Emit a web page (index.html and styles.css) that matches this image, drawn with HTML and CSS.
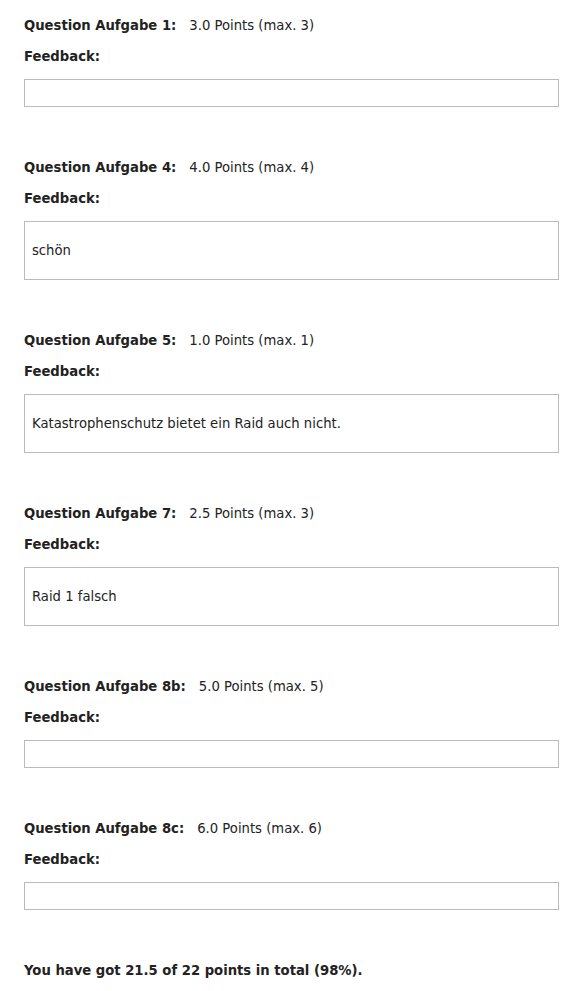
FILE: index.html
```html
<!DOCTYPE html>
<html>
<head>
<meta charset="utf-8">
<link rel="stylesheet" href="styles.css">
</head>
<body>
<div class="page">
  <div class="question">
    <div class="qline"><span class="label">Question Aufgabe 1:</span><span class="points">3.0 Points (max. 3)</span></div>
    <div class="fb">Feedback:</div>
    <div class="box"></div>
  </div>
  <div class="question">
    <div class="qline"><span class="label">Question Aufgabe 4:</span><span class="points">4.0 Points (max. 4)</span></div>
    <div class="fb">Feedback:</div>
    <div class="box text">schön</div>
  </div>
  <div class="question">
    <div class="qline"><span class="label">Question Aufgabe 5:</span><span class="points">1.0 Points (max. 1)</span></div>
    <div class="fb">Feedback:</div>
    <div class="box text">Katastrophenschutz bietet ein Raid auch nicht.</div>
  </div>
  <div class="question">
    <div class="qline"><span class="label">Question Aufgabe 7:</span><span class="points">2.5 Points (max. 3)</span></div>
    <div class="fb">Feedback:</div>
    <div class="box text">Raid 1 falsch</div>
  </div>
  <div class="question">
    <div class="qline"><span class="label">Question Aufgabe 8b:</span><span class="points">5.0 Points (max. 5)</span></div>
    <div class="fb">Feedback:</div>
    <div class="box"></div>
  </div>
  <div class="question">
    <div class="qline"><span class="label">Question Aufgabe 8c:</span><span class="points">6.0 Points (max. 6)</span></div>
    <div class="fb">Feedback:</div>
    <div class="box"></div>
  </div>
  <div class="total">You have got 21.5 of 22 points in total (98%).</div>
</div>
</body>
</html>
```
FILE: styles.css
```css
html, body {
  margin: 0;
  padding: 0;
  background: #fff;
}
body {
  font-family: "DejaVu Sans", Verdana, sans-serif;
  font-size: 13.2px;
  line-height: 16px;
  color: #222;
}
.page {
  padding: 18px 22px 0 24px;
}
.question {
  margin-bottom: 53px;
}
.qline {
  display: flex;
}
.label {
  font-weight: bold;
}
.points {
  margin-left: 13px;
}
.fb {
  font-weight: bold;
  margin-top: 15px;
}
.box {
  margin-top: 14px;
  border: 1px solid #bbb;
  height: 26px;
  padding: 0 7px;
}
.box.text {
  height: auto;
  padding: 21px 7px 20px;
}
.total {
  font-weight: bold;
}
```
